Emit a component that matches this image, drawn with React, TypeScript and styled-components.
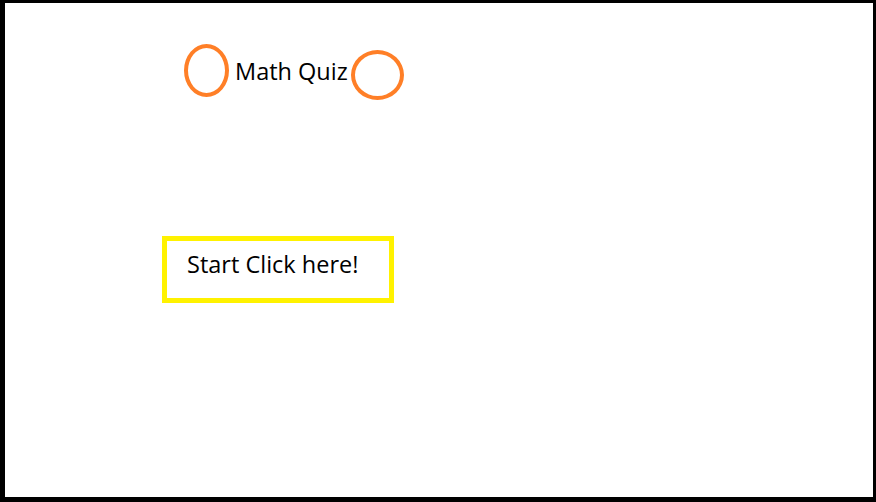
import React from "react";
import styled, { createGlobalStyle } from "styled-components";

const Global = createGlobalStyle`
  html, body { margin: 0; padding: 0; background: #ffffff; }
  body { font-family: "Open Sans", "Liberation Sans", sans-serif; }
`;

const Frame = styled.div`
  box-sizing: border-box;
  width: 876px;
  height: 502px;
  border-style: solid;
  border-color: #000000;
  border-width: 3px 3px 5px 5px;
  background: #ffffff;
  display: flex;
  flex-direction: column;
  align-items: flex-start;
`;

const Header = styled.div`
  display: flex;
  align-items: flex-start;
  margin: 41px 0 0 179px;
`;

const Ring = styled.div<{ $w: number; $h: number; $top: number }>`
  box-sizing: border-box;
  width: ${(p) => p.$w}px;
  height: ${(p) => p.$h}px;
  margin-top: ${(p) => p.$top}px;
  border: 4px solid #ff7f27;
  border-radius: 50%;
`;

const Title = styled.h1`
  margin: 12px 3px 0 6px;
  font-size: 23.5px;
  font-weight: 400;
  line-height: 30px;
  color: #000000;
`;

const StartButton = styled.button`
  box-sizing: border-box;
  width: 232px;
  height: 67px;
  margin: 136px 0 0 157px;
  padding: 0 0 11px 20px;
  border: 5px solid #fff200;
  background: #ffffff;
  text-align: left;
  font-family: "Open Sans", "Liberation Sans", sans-serif;
  font-size: 23.5px;
  color: #000000;
  cursor: pointer;
`;

export default function App() {
  return (
    <>
      <Global />
      <Frame>
        <Header>
          <Ring $w={45} $h={53} $top={0} />
          <Title>Math Quiz</Title>
          <Ring $w={53} $h={50} $top={6} />
        </Header>
        <StartButton>Start Click here!</StartButton>
      </Frame>
    </>
  );
}
